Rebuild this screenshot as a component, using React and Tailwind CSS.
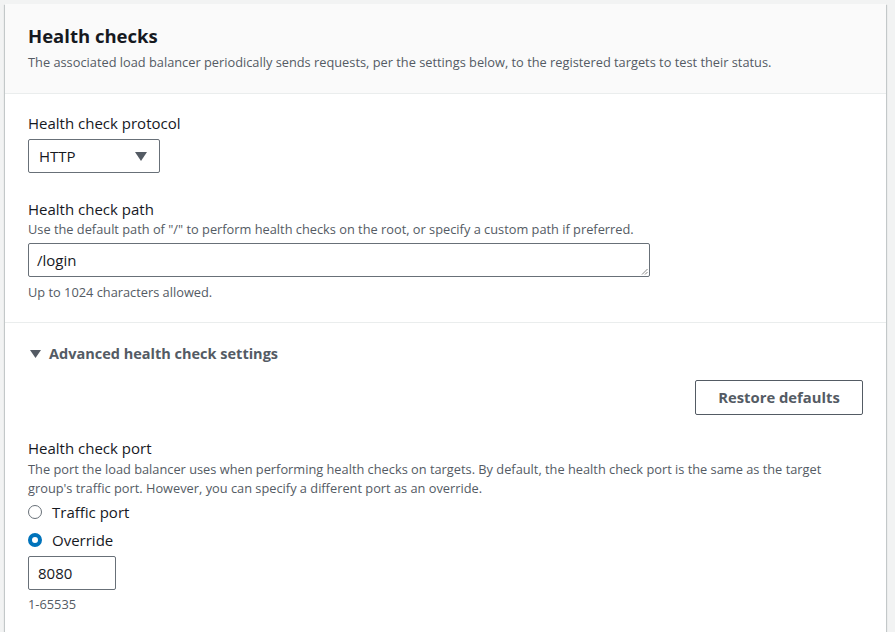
import React from "react";

const font = { fontFamily: '"Open Sans", "Noto Sans", sans-serif' };

const Radio = ({ checked, label }) => (
  <label className="flex items-center gap-[10px] h-[28px]">
    {checked ? (
      <span className="w-[14px] h-[14px] rounded-full border-[4px] border-[#0073bb] bg-white" />
    ) : (
      <span className="w-[14px] h-[14px] rounded-full border-[1.5px] border-[#687078] bg-white" />
    )}
    <span className="text-[15px] text-[#16191f]">{label}</span>
  </label>
);

export default function App() {
  return (
    <div className="min-h-[632px] bg-[#f2f3f3] pl-[5px] pt-[4px] pr-[9px] overflow-hidden" style={font}>
      <div className="bg-white shadow-[0_1px_1px_0_rgba(0,28,36,0.3),1px_1px_1px_0_rgba(0,28,36,0.15),-1px_1px_1px_0_rgba(0,28,36,0.15)] min-h-[640px]">
        <div className="bg-[#fafafa] border-b border-[#eaeded] px-[23px] pt-[20px] pb-[21px]">
          <h2 className="text-[18.5px] font-bold text-[#16191f] leading-[24px]">Health checks</h2>
          <p className="text-[12.8px] text-[#545b64] leading-[20px] mt-[4px]">
            The associated load balancer periodically sends requests, per the settings below, to the registered targets to test their status.
          </p>
        </div>

        <div className="px-[23px] pt-[18px] pb-[21px] border-b border-[#eaeded]">
          <div className="text-[15px] text-[#16191f] leading-[22px]">Health check protocol</div>
          <div className="mt-[5px] w-[132px] h-[34px] border border-[#687078] rounded-[2px] flex items-center justify-between pl-[10px] pr-[12px]">
            <span className="text-[15px] text-[#16191f]">HTTP</span>
            <svg width="12" height="9" viewBox="0 0 12 9">
              <path d="M0 0h12L6 9z" fill="#545b64" />
            </svg>
          </div>

          <div className="mt-[25px] text-[15px] text-[#16191f] leading-[22px]">Health check path</div>
          <div className="text-[12.8px] text-[#545b64] leading-[19px]">
            Use the default path of "/" to perform health checks on the root, or specify a custom path if preferred.
          </div>
          <div className="relative mt-[4px] w-[622px] h-[34px] border border-[#687078] rounded-[2px] flex items-center pl-[8px]">
            <span className="text-[15px] text-[#16191f]">/login</span>
            <svg className="absolute right-[1px] bottom-[1px]" width="7" height="7" viewBox="0 0 7 7">
              <path d="M6.5 1L1 6.5M6.5 4L4 6.5" stroke="#888" strokeWidth="1" />
            </svg>
          </div>
          <div className="mt-[6px] text-[12.8px] text-[#545b64] leading-[18px]">Up to 1024 characters allowed.</div>
        </div>

        <div className="px-[23px] pt-[20px]">
          <div className="flex items-center gap-[8px] h-[22px]">
            <svg className="ml-[2px]" width="11" height="8" viewBox="0 0 11 8">
              <path d="M0 0h11L5.5 8z" fill="#545b64" />
            </svg>
            <span className="text-[14.5px] font-bold text-[#545b64]">Advanced health check settings</span>
          </div>

          <div className="flex justify-end mt-[15px]">
            <button className="w-[168px] h-[35px] border border-[#545b64] rounded-[2px] bg-white text-[14.8px] font-bold text-[#545b64]">
              Restore defaults
            </button>
          </div>

          <div className="mt-[22px] text-[15px] text-[#16191f] leading-[22px]">Health check port</div>
          <div className="mt-[1px] text-[12.8px] text-[#545b64] leading-[19px] max-w-[810px]">
            The port the load balancer uses when performing health checks on targets. By default, the health check port is the same as the target group's traffic port. However, you can specify a different port as an override.
          </div>
          <div className="mt-[0px]">
            <Radio label="Traffic port" />
            <Radio checked label="Override" />
          </div>
          <div className="mt-[2px] w-[88px] h-[34px] border border-[#687078] rounded-[2px] flex items-center pl-[9px]">
            <span className="text-[15px] text-[#16191f]">8080</span>
          </div>
          <div className="mt-[5px] text-[12.8px] text-[#545b64] leading-[18px]">1-65535</div>
        </div>
      </div>
    </div>
  );
}
